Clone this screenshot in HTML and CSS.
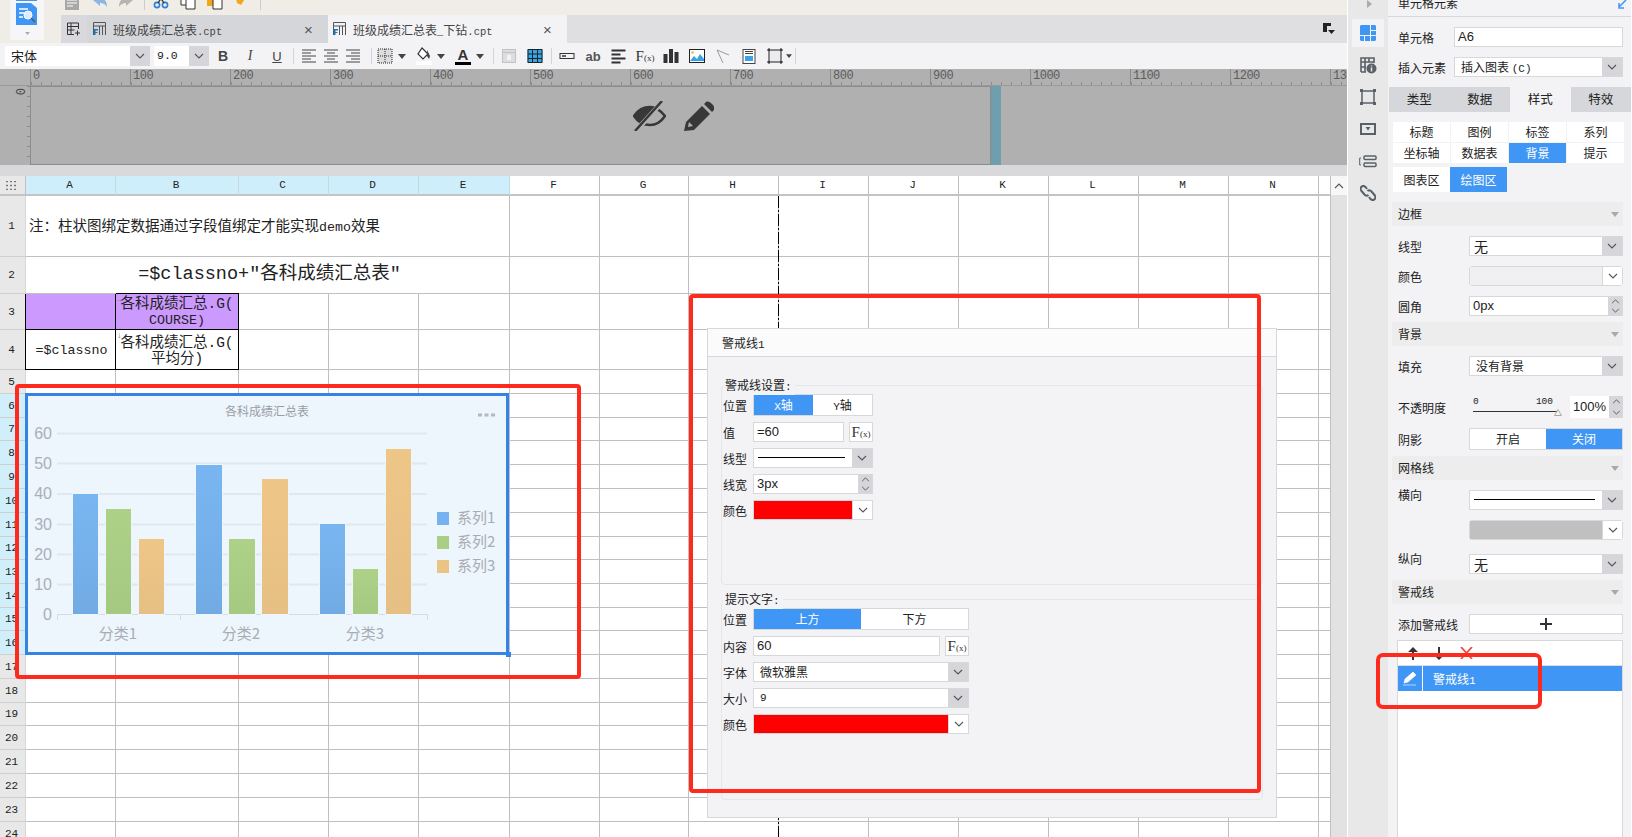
FILE: index.html
```html
<!DOCTYPE html>
<html lang="zh-CN">
<head>
  <meta charset="UTF-8" />
  <title>班级成绩汇总表_下钻.cpt</title>
  <link rel="stylesheet" href="styles.css">
</head>
<body>
<svg class="sprite" aria-hidden="true">
  <symbol id="chev" viewBox="0 0 10 6"><path d="M1 1l4 4 4-4" fill="none" stroke="#555" stroke-width="1.1"/></symbol>
  <symbol id="chev-up" viewBox="0 0 10 6"><path d="M1 5l4-4 4 4" fill="none" stroke="#555" stroke-width="1.1"/></symbol>
  <symbol id="caret" viewBox="0 0 8 5"><path d="M0 0h8L4 5z" fill="#444"/></symbol>
  <symbol id="fold" viewBox="0 0 8 5"><path d="M0 0h8L4 5z" fill="#a9a9a9"/></symbol>
</svg>

<div class="app">
  <div class="main">
    <!-- top: logo, quick bar, tabs -->
    <div class="head">
      <div class="logo-col">
        <div class="logo">
          <svg width="21" height="22" viewBox="0 0 21 22">
            <path d="M0 0h15l6 5v17H0z" fill="#4096f5"/>
            <path d="M3 6h9M3 10h5M3 14h4" stroke="#fff" stroke-width="1.4"/>
            <circle cx="12" cy="12" r="4" fill="#dcecfb" stroke="#fff"/>
            <path d="M15 15l4 4" stroke="#555" stroke-width="1.5"/>
          </svg>
          <svg class="logo-caret" width="5" height="3"><use href="#fold"/></svg>
        </div>
      </div>
      <div class="head-right">
        <div class="quick">
          <svg class="q1" width="16" height="16" viewBox="0 0 16 16"><path d="M1 0h14v16H1z" fill="#a8a8a8"/><path d="M3 6h10M3 9h10M3 12h6" stroke="#fff"/></svg>
          <svg class="q2" width="16" height="16" viewBox="0 0 16 16"><path d="M1 6l7-5v3c4 0 7 3 7 9-2-3-4-4-7-4v3z" fill="#8db6e6"/></svg>
          <svg class="q2" width="16" height="16" viewBox="0 0 16 16"><path d="M15 6L8 1v3C4 4 1 7 1 13c2-3 4-4 7-4v3z" fill="#b5b5b5"/></svg>
          <i class="qsep"></i>
          <svg class="q3" width="16" height="16" viewBox="0 0 16 16"><circle cx="4" cy="11" r="2.6" fill="none" stroke="#2e7fd6" stroke-width="1.6"/><circle cx="12" cy="11" r="2.6" fill="none" stroke="#2e7fd6" stroke-width="1.6"/><path d="M5 9L11 0M11 9L5 0" stroke="#333" stroke-width="1.3"/></svg>
          <svg class="q4" width="16" height="16" viewBox="0 0 16 16"><path d="M1 0h9v11H1z" fill="#fff" stroke="#333"/><path d="M6 4h9v11H6z" fill="#fff" stroke="#333"/></svg>
          <svg class="q4" width="16" height="16" viewBox="0 0 16 16"><path d="M0 0h11v12H0z" fill="#f2a61c"/><path d="M6 4h9v11H6z" fill="#fff" stroke="#333"/></svg>
          <svg class="q4" width="13" height="16" viewBox="0 0 13 16"><path d="M1 0h9l2 3-5 8-4-2z" fill="#f2a61c"/></svg>
          <i class="qsep qsep-last"></i>
        </div>
        <div class="tabs">
          <div class="tab-add">
            <svg width="14" height="14" viewBox="0 0 14 14"><path d="M.5 12.5V1h11v6M.5 4.5h11M4 1v11.500M.5 8h7M.5 12.500H7M10.500 8.500v5M8 11h5" fill="none" stroke="#333"/></svg>
          </div>
          <div class="tab">
            <svg width="13" height="14" viewBox="0 0 13 14"><path d="M.5 13V.5h12V13M.5 4h12M6.500 4v9M9.500 4v9" fill="none" stroke="#555"/><path d="M1 7h4v1.500H2.500V10H4.500v1H2.500v2H1z" fill="#1478c8"/></svg>
            <span class="tab-name">班级成绩汇总表<span class="tab-ext">.cpt</span></span>
            <span class="tab-x">×</span>
          </div>
          <div class="tab tab-on">
            <svg width="13" height="14" viewBox="0 0 13 14"><path d="M.5 13V.5h12V13M.5 4h12M6.500 4v9M9.500 4v9" fill="none" stroke="#555"/><path d="M1 7h4v1.500H2.500V10H4.500v1H2.500v2H1z" fill="#1478c8"/></svg>
            <span class="tab-name">班级成绩汇总表<span class="tab-ext">_</span>下钻<span class="tab-ext">.cpt</span></span>
            <span class="tab-x">×</span>
          </div>
          <div class="tab-more">
            <svg width="14" height="14" viewBox="0 0 14 14"><path d="M1 1h8v3H5v6H1z" fill="#222"/><path d="M6 8h7l-3.500 4z" fill="#222"/></svg>
          </div>
        </div>
      </div>
    </div>

    <div class="toolbar">
      <div class="sel font-sel"><span class="sel-val">宋体</span><span class="chev"><svg width="10" height="6"><use href="#chev"/></svg></span></div>
      <div class="sel size-sel"><span class="sel-val mono">9.0</span><span class="chev"><svg width="10" height="6"><use href="#chev"/></svg></span></div>

      <div class="tg tg-text">
        <span class="tool t-b">B</span><span class="tool t-i">I</span><span class="tool t-u">U</span>
      </div>
      <i class="tsep"></i>
      <div class="tg tg-align">
        <svg class="tool" width="20" height="14" viewBox="0 0 20 14"><path d="M3 1h14M3 4h9M3 7h14M3 10h9M3 13h14" stroke="#444"/></svg>
        <svg class="tool" width="20" height="14" viewBox="0 0 20 14"><path d="M3 1h14M6 4h8M3 7h14M6 10h8M3 13h14" stroke="#444"/></svg>
        <svg class="tool" width="20" height="14" viewBox="0 0 20 14"><path d="M3 1h14M8 4h9M3 7h14M8 10h9M3 13h14" stroke="#444"/></svg>
      </div>
      <i class="tsep tsep-align"></i>
      <div class="tg tg-drops">
        <div class="tdrop">
          <svg class="tool" width="16" height="16" viewBox="0 0 16 16"><rect x="1" y="1" width="14" height="14" fill="#ddd" stroke="#222" stroke-dasharray="1 1"/><path d="M8 1v14M1 8h14" stroke="#222" stroke-dasharray="1 1"/></svg>
          <svg class="caret" width="8" height="5"><use href="#caret"/></svg>
        </div>
        <div class="tdrop">
          <svg class="tool" width="16" height="18" viewBox="0 0 16 18"><path d="M6 1l6 6-5 5-5-5z" fill="#fff" stroke="#333" stroke-width="1.200"/><path d="M11 3l3 6-1 3-2-3z" fill="#444"/><rect y="14" width="16" height="4" fill="#fff"/></svg>
          <svg class="caret" width="8" height="5"><use href="#caret"/></svg>
        </div>
        <div class="tdrop">
          <span class="tool t-a">A</span>
          <svg class="caret" width="8" height="5"><use href="#caret"/></svg>
        </div>
      </div>
      <i class="tsep"></i>
      <div class="tg tg-six">
        <svg class="tool" width="14" height="14" viewBox="0 0 14 14"><rect x=".5" y=".5" width="13" height="13" fill="#ddd" stroke="#c2c2c2"/><path d="M.5 3.500h13" stroke="#c2c2c2"/><rect x="5" y="6" width="4" height="5" fill="#f3f3f6"/></svg>
        <svg class="tool" width="15" height="14" viewBox="0 0 15 14"><rect width="15" height="14" fill="#35a5ea"/><path d="M.5.500h14v13H.5zM.5 5h14M.5 9.500h14M5 .5v13M10 .5v13" fill="none" stroke="#222"/></svg>
      </div>
      <i class="tsep"></i>
      <div class="tg tg-six">
        <svg class="tool" width="15" height="6" viewBox="0 0 15 6"><rect x=".5" y=".5" width="14" height="5" fill="none" stroke="#333"/><path d="M2.500 3h4" stroke="#333" stroke-width="1.500"/></svg>
        <span class="tool t-ab">ab</span>
        <svg class="tool" width="15" height="15" viewBox="0 0 15 15"><path d="M0 1.500h14M0 5.500h9M0 9.500h14M0 13.500h9" stroke="#333" stroke-width="2"/></svg>
        <span class="tool t-fx">F<small>(x)</small></span>
        <svg class="tool" width="15" height="14" viewBox="0 0 15 14"><path d="M0 5h4v9H0zM5.500 0h4v14h-4zM11 3h4v11h-4z" fill="#333"/></svg>
        <svg class="tool" width="16" height="14" viewBox="0 0 16 14"><rect x=".5" y=".5" width="15" height="13" fill="#fff" stroke="#222"/><circle cx="3.500" cy="3.500" r="1.300" fill="#f5b642"/><path d="M1 12l4-5 3 3 3-5 4 5v2H1z" fill="#3aa3e8"/></svg>
        <svg class="tool" width="14" height="15" viewBox="0 0 14 15"><path d="M1 1l12 5M1 1l6 13" fill="none" stroke="#999"/></svg>
        <svg class="tool" width="13" height="15" viewBox="0 0 13 15"><rect x=".5" y=".5" width="12" height="14" fill="#fff" stroke="#444"/><path d="M2.500 2.500h8M2.500 4.500h8" stroke="#444"/><rect x="2.500" y="7" width="8" height="5" fill="#3aa3e8"/></svg>
        <svg class="tool" width="16" height="16" viewBox="0 0 16 16"><rect x="2" y="2" width="12" height="12" fill="#ececee" stroke="#222"/><path d="M2 0v3M0 2h3M14 0v3M13 2h3M2 13v3M0 14h3M14 13v3M13 14h3" stroke="#222"/></svg>
        <svg class="caret caret-box" width="6" height="4"><use href="#caret"/></svg>
      </div>
      <i class="tsep tsep-end"></i>
    </div>

    <div class="ruler">
      <span class="rmark">0</span><span class="rmark">100</span><span class="rmark">200</span><span class="rmark">300</span><span class="rmark">400</span><span class="rmark">500</span><span class="rmark">600</span><span class="rmark">700</span><span class="rmark">800</span><span class="rmark">900</span><span class="rmark">1000</span><span class="rmark">1100</span><span class="rmark">1200</span><span class="rmark">1300</span>
    </div>
    <div class="canvas">
      <div class="vruler"><span class="vzero">0</span></div>
      <div class="design">
        <svg width="33" height="30" viewBox="0 0 33 30">
          <path d="M1 15C5 9 10 6 17 6c6 0 11 4 15 9-4 6-9 9-15 9-7 0-12-3-16-9z" fill="none" stroke="#383838" stroke-width="2.500"/>
          <path d="M1 15C5 9 10 6 17 6h5L8 22c-3-2-5-4-7-7z" fill="#383838"/>
          <path d="M3 30L30 0" stroke="#b0b0b0" stroke-width="5"/>
          <path d="M2 30L29 0" stroke="#383838" stroke-width="2.500"/>
        </svg>
        <svg class="pencil" width="30" height="30" viewBox="0 0 30 30">
          <path d="M22 1c2-1 4 0 6 2s3 4 2 6l-2 2-8-8zM18 5l8 8L10 29 0 30l2-9zM5 21l-1 5 5-1z" fill="#383838" fill-rule="evenodd"/>
        </svg>
      </div>
      <div class="band"></div>
    </div>

    <div class="sheet-wrap">
      <table class="sheet">
        <colgroup>
          <col class="c26"><col class="c90"><col class="c123"><col class="c90"><col class="c90"><col class="c91"><col class="c90"><col class="c89"><col class="c90"><col class="c90"><col class="c90"><col class="c90"><col class="c90"><col class="c90"><col class="c90"><col class="c12">
        </colgroup>
        <tr class="r20 heads">
          <th class="corner"><svg width="12" height="9" viewBox="0 0 12 9"><path d="M0 .5h12M0 4.500h12M0 8.500h12" stroke="#777" stroke-width="1.500" stroke-dasharray="2 2"/></svg></th>
          <th class="csel">A</th><th class="csel">B</th><th class="csel">C</th><th class="csel">D</th><th class="csel">E</th><th>F</th><th>G</th><th>H</th><th>I</th><th>J</th><th>K</th><th>L</th><th>M</th><th>N</th><th></th>
        </tr>
        <tr class="r61"><th>1</th><td colspan="5" class="note">注：柱状图绑定数据通过字段值绑定才能实现<span class="lat">demo</span>效果</td><td></td><td></td><td></td><td></td><td></td><td></td><td></td><td></td><td></td><td></td></tr>
        <tr class="r37"><th>2</th><td colspan="5" class="big">=$classno+"各科成绩汇总表"</td><td></td><td></td><td></td><td></td><td></td><td></td><td></td><td></td><td></td><td></td></tr>
        <tr class="r36"><th>3</th><td class="box purple"></td><td class="box purple mid"><span class="flag">→</span>各科成绩汇总.G(<br><span class="lat">COURSE)</span></td><td></td><td></td><td></td><td></td><td></td><td></td><td></td><td></td><td></td><td></td><td></td><td></td><td></td></tr>
        <tr class="r40"><th>4</th><td class="box mid"><span class="lat classno">=$classno</span></td><td class="box mid"><span class="flag">↓</span>各科成绩汇总.G(<br>平均分)</td><td></td><td></td><td></td><td></td><td></td><td></td><td></td><td></td><td></td><td></td><td></td><td></td><td></td></tr>
        <tr class="r24"><th>5</th><td></td><td></td><td></td><td></td><td></td><td></td><td></td><td></td><td></td><td></td><td></td><td></td><td></td><td></td><td></td></tr>
        <tr class="r24"><th class="rsel">6</th><td></td><td></td><td></td><td></td><td></td><td></td><td></td><td></td><td></td><td></td><td></td><td></td><td></td><td></td><td></td></tr>
        <tr class="r23"><th class="rsel">7</th><td></td><td></td><td></td><td></td><td></td><td></td><td></td><td></td><td></td><td></td><td></td><td></td><td></td><td></td><td></td></tr>
        <tr class="r24"><th class="rsel">8</th><td></td><td></td><td></td><td></td><td></td><td></td><td></td><td></td><td></td><td></td><td></td><td></td><td></td><td></td><td></td></tr>
        <tr class="r24"><th class="rsel">9</th><td></td><td></td><td></td><td></td><td></td><td></td><td></td><td></td><td></td><td></td><td></td><td></td><td></td><td></td><td></td></tr>
        <tr class="r24"><th class="rsel">10</th><td></td><td></td><td></td><td></td><td></td><td></td><td></td><td></td><td></td><td></td><td></td><td></td><td></td><td></td><td></td></tr>
        <tr class="r24"><th class="rsel">11</th><td></td><td></td><td></td><td></td><td></td><td></td><td></td><td></td><td></td><td></td><td></td><td></td><td></td><td></td><td></td></tr>
        <tr class="r23"><th class="rsel">12</th><td></td><td></td><td></td><td></td><td></td><td></td><td></td><td></td><td></td><td></td><td></td><td></td><td></td><td></td><td></td></tr>
        <tr class="r24"><th class="rsel">13</th><td></td><td></td><td></td><td></td><td></td><td></td><td></td><td></td><td></td><td></td><td></td><td></td><td></td><td></td><td></td></tr>
        <tr class="r24"><th class="rsel">14</th><td></td><td></td><td></td><td></td><td></td><td></td><td></td><td></td><td></td><td></td><td></td><td></td><td></td><td></td><td></td></tr>
        <tr class="r23"><th class="rsel">15</th><td></td><td></td><td></td><td></td><td></td><td></td><td></td><td></td><td></td><td></td><td></td><td></td><td></td><td></td><td></td></tr>
        <tr class="r24"><th class="rsel">16</th><td></td><td></td><td></td><td></td><td></td><td></td><td></td><td></td><td></td><td></td><td></td><td></td><td></td><td></td><td></td></tr>
        <tr class="r24"><th>17</th><td></td><td></td><td></td><td></td><td></td><td></td><td></td><td></td><td></td><td></td><td></td><td></td><td></td><td></td><td></td></tr>
        <tr class="r24"><th>18</th><td></td><td></td><td></td><td></td><td></td><td></td><td></td><td></td><td></td><td></td><td></td><td></td><td></td><td></td><td></td></tr>
        <tr class="r23"><th>19</th><td></td><td></td><td></td><td></td><td></td><td></td><td></td><td></td><td></td><td></td><td></td><td></td><td></td><td></td><td></td></tr>
        <tr class="r24"><th>20</th><td></td><td></td><td></td><td></td><td></td><td></td><td></td><td></td><td></td><td></td><td></td><td></td><td></td><td></td><td></td></tr>
        <tr class="r24"><th>21</th><td></td><td></td><td></td><td></td><td></td><td></td><td></td><td></td><td></td><td></td><td></td><td></td><td></td><td></td><td></td></tr>
        <tr class="r24"><th>22</th><td></td><td></td><td></td><td></td><td></td><td></td><td></td><td></td><td></td><td></td><td></td><td></td><td></td><td></td><td></td></tr>
        <tr class="r24"><th>23</th><td></td><td></td><td></td><td></td><td></td><td></td><td></td><td></td><td></td><td></td><td></td><td></td><td></td><td></td><td></td></tr>
        <tr class="r24"><th>24</th><td></td><td></td><td></td><td></td><td></td><td></td><td></td><td></td><td></td><td></td><td></td><td></td><td></td><td></td><td></td></tr>
      </table>
      <div class="vscroll"><svg width="10" height="6"><use href="#chev-up"/></svg></div>
    </div>
  </div>

  <!-- icon strip -->
  <div class="strip">
    <svg class="strip-arrow" width="5" height="8" viewBox="0 0 5 8"><path d="M0 0l5 4-5 4z" fill="#aaa"/></svg>
    <div class="strip-item strip-on">
      <svg width="16" height="16" viewBox="0 0 16 16"><path d="M1 0h9v10H0V1zM11 0h4l1 1v4h-5zM11 6h5v4h-5zM0 11h4v5H1l-1-1zM5 11h5v5H5zM11 11h5v4l-1 1h-4z" fill="#4096f5"/></svg>
    </div>
    <div class="strip-item">
      <svg width="17" height="17" viewBox="0 0 17 17"><path d="M1 15V1h13v5M1 5h13M5 1v14M9 1v4M1 10h5M1 15h5" fill="none" stroke="#5a6068" stroke-width="1.600"/><circle cx="11.500" cy="11.500" r="5" fill="#5a6068"/><path d="M11.500 8.500v1M11.500 10.500v4" stroke="#e8e8e8" stroke-width="1.500"/></svg>
    </div>
    <div class="strip-item">
      <svg width="16" height="16" viewBox="0 0 16 16"><rect x="2" y="2" width="12" height="12" fill="none" stroke="#5a6068" stroke-width="1.500"/><path d="M0 0h3v3H0zM13 0h3v3h-3zM0 13h3v3H0zM13 13h3v3h-3z" fill="#5a6068"/></svg>
    </div>
    <div class="strip-item">
      <svg width="16" height="12" viewBox="0 0 16 12"><rect x="1" y="1" width="14" height="10" fill="none" stroke="#5a6068" stroke-width="2"/><path d="M5.500 4h5L8 7.500z" fill="#5a6068"/></svg>
    </div>
    <div class="strip-item">
      <svg width="18" height="13" viewBox="0 0 18 13"><path d="M2 3H.7v7H2" fill="none" stroke="#5a6068"/><rect x="5" y="1" width="12" height="3.500" rx="1" fill="none" stroke="#5a6068" stroke-width="1.500"/><rect x="5" y="8" width="12" height="3.500" rx="1" fill="none" stroke="#5a6068" stroke-width="1.500"/></svg>
    </div>
    <div class="strip-item">
      <svg width="16" height="16" viewBox="0 0 16 16"><path d="M7 4l-1.500-2C4 .6 2.500.8 1.500 1.800S.2 4.500 1.500 6l3 3.500C6 11 7.500 11 8.500 10M9 12l1.500 2c1.500 1.400 3 1.200 4 .2s1.300-2.700 0-4.200l-3-3.500C10 5 8.500 5 7.500 6" fill="none" stroke="#5a6068" stroke-width="2"/></svg>
    </div>
  </div>

  <!-- property panel -->
  <div class="pane">
    <div class="pane-head">
      <span>单元格元素</span>
      <svg width="9" height="9" viewBox="0 0 9 9"><path d="M8 0L1 7M1 3v5h5" fill="none" stroke="#4096f5" stroke-width="1.500"/></svg>
    </div>
    <div class="prow narrow"><label>单元格</label><div class="ctl"><span class="val lat">A6</span></div></div>
    <div class="prow narrow"><label>插入元素</label><div class="ctl"><span class="val pad">插入图表 <span class="lat-sm">(C)</span></span><span class="chev"><svg width="10" height="6"><use href="#chev"/></svg></span></div></div>

    <div class="ptabs"><span>类型</span><span>数据</span><span class="on">样式</span><span>特效</span></div>

    <div class="subtabs">
      <span>标题</span><span>图例</span><span>标签</span><span>系列</span>
      <span>坐标轴</span><span>数据表</span><span class="on">背景</span><span>提示</span>
    </div>
    <div class="subtabs area g4"><span>图表区</span><span class="on">绘图区</span></div>

    <div class="section">边框<svg width="8" height="5"><use href="#fold"/></svg></div>
    <div class="prow"><label>线型</label><div class="ctl"><span class="val cn">无</span><span class="chev"><svg width="10" height="6"><use href="#chev"/></svg></span></div></div>
    <div class="prow"><label>颜色</label><div class="ctl round"><span class="val blank"></span><span class="chev chev-w"><svg width="10" height="6"><use href="#chev"/></svg></span></div></div>
    <div class="prow"><label>圆角</label><div class="ctl"><span class="val lat">0px</span><span class="spin"><svg width="9" height="5"><use href="#chev-up"/></svg><svg width="9" height="5"><use href="#chev"/></svg></span></div></div>

    <div class="section g6">背景<svg width="8" height="5"><use href="#fold"/></svg></div>
    <div class="prow"><label>填充</label><div class="ctl"><span class="val pad">没有背景</span><span class="chev"><svg width="10" height="6"><use href="#chev"/></svg></span></div></div>
    <div class="prow g20 tall"><label>不透明度</label>
      <div class="slider"><span class="slider-nums"><b>0</b><b>100</b></span><span class="slider-line"></span><svg class="slider-thumb" width="8" height="7" viewBox="0 0 8 7"><path d="M4 .5l3.500 6H.5z" fill="#f3f3f6" stroke="#aaa"/></svg></div>
      <div class="ctl pct"><span class="val lat-c">100%</span><span class="spin"><svg width="9" height="5"><use href="#chev-up"/></svg><svg width="9" height="5"><use href="#chev"/></svg></span></div>
    </div>
    <div class="prow seg-row"><label>阴影</label><div class="seg panel-seg"><span>开启</span><span class="on">关闭</span></div></div>

    <div class="section g6">网格线<svg width="8" height="5"><use href="#fold"/></svg></div>
    <div class="prow"><label class="up">横向</label><div class="ctl"><span class="val"><i class="line"></i></span><span class="chev"><svg width="10" height="6"><use href="#chev"/></svg></span></div></div>
    <div class="prow"><label></label><div class="ctl round"><span class="val greyfill"></span><span class="chev chev-w"><svg width="10" height="6"><use href="#chev"/></svg></span></div></div>
    <div class="prow g14"><label class="up">纵向</label><div class="ctl"><span class="val cn">无</span><span class="chev"><svg width="10" height="6"><use href="#chev"/></svg></span></div></div>

    <div class="section g6">警戒线<svg width="8" height="5"><use href="#fold"/></svg></div>
    <div class="prow"><label>添加警戒线</label><div class="ctl add-btn"><svg width="12" height="12" viewBox="0 0 12 12"><path d="M6 0v12M0 6h12" stroke="#333" stroke-width="2"/></svg></div></div>

    <div class="alert-list g6">
      <div class="list-tools">
        <svg width="10" height="13" viewBox="0 0 10 13"><path d="M5 0l5 5H6v8H4V5H0z" fill="#333"/></svg>
        <svg width="10" height="13" viewBox="0 0 10 13"><path d="M5 13l5-5H6V0H4v8H0z" fill="#333"/></svg>
        <svg width="13" height="12" viewBox="0 0 13 12"><path d="M1 0l11 12M12 0L1 12" stroke="#f04a3a" stroke-width="1.800"/></svg>
      </div>
      <div class="list-row">
        <span class="list-edit"><svg width="14" height="14" viewBox="0 0 14 14"><path d="M10 0l3 3-8 7-4 1 1-4zM0 13h13" fill="#fff" stroke="#fff" stroke-width=".6"/></svg></span>
        <span class="list-name">警戒线<span class="lat-sm">1</span></span>
      </div>
    </div>
  </div>

  <!-- things lying over the sheet -->
  <i class="dashline"></i>

  <div class="chart">
    <svg width="490" height="268" viewBox="22 390 490 268">
      <defs>
        <linearGradient id="gb" x1="0" y1="0" x2="0" y2="1"><stop offset="0" stop-color="#79b6f1"/><stop offset="1" stop-color="#72abe4"/></linearGradient>
        <linearGradient id="gg" x1="0" y1="0" x2="0" y2="1"><stop offset="0" stop-color="#add187"/><stop offset="1" stop-color="#a5c981"/></linearGradient>
        <linearGradient id="go" x1="0" y1="0" x2="0" y2="1"><stop offset="0" stop-color="#eec687"/><stop offset="1" stop-color="#e6bf84"/></linearGradient>
      </defs>
      <rect x="26.500" y="394.500" width="481" height="259" fill="#edf5fd" stroke="#3683e8" stroke-width="3"/>
      <rect x="506" y="652" width="5" height="5" fill="#3683e8"/>
      <text class="ch-title" x="267" y="416" text-anchor="middle">各科成绩汇总表</text>
      <path d="M478 415h4M484.500 415h4M491 415h4" stroke="#b5b9bf" stroke-width="3"/>
      <g class="ch-grid">
        <path d="M57 433.500h370M57 463.500h370M57 494h370M57 524.500h370M57 554.500h370M57 584.500h370"/>
      </g>
      <path class="ch-axis" d="M57.500 620v-5.500h370v5.500M180.500 614.500V620"/>
      <g class="ch-nums" text-anchor="end">
        <text x="52" y="439">60</text><text x="52" y="469">50</text><text x="52" y="499">40</text><text x="52" y="530">30</text><text x="52" y="560">20</text><text x="52" y="590">10</text><text x="52" y="620">0</text>
      </g>
      <g class="ch-bars">
        <rect x="73" y="494" width="25" height="120" fill="url(#gb)"/>
        <rect x="106" y="509" width="25" height="105" fill="url(#gg)"/>
        <rect x="139" y="539" width="25" height="75" fill="url(#go)"/>
        <rect x="196" y="465" width="26" height="149" fill="url(#gb)"/>
        <rect x="229" y="539" width="26" height="75" fill="url(#gg)"/>
        <rect x="262" y="479" width="26" height="135" fill="url(#go)"/>
        <rect x="320" y="524" width="25" height="90" fill="url(#gb)"/>
        <rect x="353" y="569" width="25" height="45" fill="url(#gg)"/>
        <rect x="386" y="449" width="25" height="165" fill="url(#go)"/>
      </g>
      <g class="ch-labels" text-anchor="middle">
        <text x="118" y="639">分类1</text><text x="241" y="639">分类2</text><text x="365" y="639">分类3</text>
      </g>
      <rect x="437" y="512" width="12" height="13" fill="#75b2ef"/>
      <rect x="437" y="536" width="12" height="13" fill="#a9ce84"/>
      <rect x="437" y="560" width="12" height="13" fill="#ebc384"/>
      <g class="ch-labels">
        <text x="457" y="523">系列1</text><text x="457" y="547">系列2</text><text x="457" y="571">系列3</text>
      </g>
    </svg>
  </div>

  <div class="dialog">
    <div class="dlg-title">警戒线<span class="lat-sm">1</span></div>
    <div class="group g-first">
      <span class="legend">警戒线设置<span class="lat-sm">:</span></span>
      <div class="drow"><label>位置</label><div class="seg seg-short tall-seg"><span class="on"><span class="lat-sm">X</span>轴</span><span><span class="lat-sm">Y</span>轴</span></div></div>
      <div class="drow"><label>值</label><div class="ctl c-value"><span class="val lat">=60</span></div><div class="ctl fx"><span class="t-fx">F<small>(x)</small></span></div></div>
      <div class="drow"><label>线型</label><div class="ctl c-short"><span class="val"><i class="line"></i></span><span class="chev"><svg width="10" height="6"><use href="#chev"/></svg></span></div></div>
      <div class="drow"><label>线宽</label><div class="ctl c-short"><span class="val lat">3px</span><span class="spin"><svg width="9" height="5"><use href="#chev-up"/></svg><svg width="9" height="5"><use href="#chev"/></svg></span></div></div>
      <div class="drow"><label>颜色</label><div class="ctl c-short"><span class="val redfill"></span><span class="chev chev-w"><svg width="10" height="6"><use href="#chev"/></svg></span></div></div>
    </div>
    <div class="group g-second">
      <span class="legend">提示文字<span class="lat-sm">:</span></span>
      <div class="drow"><label>位置</label><div class="seg seg-wide tall-seg"><span class="on">上方</span><span>下方</span></div></div>
      <div class="drow"><label>内容</label><div class="ctl c-content"><span class="val lat">60</span></div><div class="ctl fx"><span class="t-fx">F<small>(x)</small></span></div></div>
      <div class="drow"><label>字体</label><div class="ctl c-wide"><span class="val pad">微软雅黑</span><span class="chev"><svg width="10" height="6"><use href="#chev"/></svg></span></div></div>
      <div class="drow"><label>大小</label><div class="ctl c-wide"><span class="val pad lat-sm">9</span><span class="chev"><svg width="10" height="6"><use href="#chev"/></svg></span></div></div>
      <div class="drow"><label>颜色</label><div class="ctl c-wide"><span class="val redfill"></span><span class="chev chev-w"><svg width="10" height="6"><use href="#chev"/></svg></span></div></div>
    </div>
  </div>

  <i class="mark mark-chart"></i>
  <i class="mark mark-dialog"></i>
  <i class="mark mark-list"></i>
</div>
</body>
</html>
```

FILE: styles.css
```css
* {
  margin: 0;
  padding: 0;
  box-sizing: border-box;
}
html, body {
  width: 1632px;
  height: 837px;
  overflow: hidden;
  background: #fff;
  font-family: "Noto Sans CJK SC", "Liberation Sans", sans-serif;
  font-size: 12px;
  color: #222;
}
.sprite {
  position: absolute;
  width: 0;
  height: 0;
}
.app {
  position: relative;
  display: flex;
  width: 1632px;
  height: 837px;
  overflow: hidden;
}
i {
  font-style: normal;
  display: block;
}
.lat {
  font-family: "Liberation Mono", "Noto Sans CJK SC", monospace;
  font-size: 13.3px;
}
.lat-sm {
  font-family: "Liberation Mono", "Noto Sans CJK SC", monospace;
  font-size: 11px;
}
.mono {
  font-family: "Liberation Mono", monospace;
}

/* left column */
.main {
  width: 1348px;
  display: flex;
  flex-direction: column;
  border-right: 1px solid #fff;
}
.head {
  display: flex;
  height: 43px;
  background: #f0ede6;
}
.logo-col {
  width: 61px;
  padding-left: 10px;
}
.logo {
  position: relative;
  width: 34px;
  height: 40px;
  background: #f6f6f9;
  padding: 3px 0 0 6px;
}
.logo::before {
  content: "";
  position: absolute;
  left: 6px;
  top: 0;
  width: 21px;
  height: 1px;
  background: #4096f5;
}
.logo-caret {
  position: absolute;
  left: 15px;
  top: 32px;
}
.head-right {
  flex: 1;
  display: flex;
  flex-direction: column;
}
.quick {
  height: 15px;
  display: flex;
  align-items: flex-start;
  overflow: hidden;
  padding-left: 3px;
}
.quick svg {
  margin-top: -6px;
}
.q1 { margin-right: 12px; }
.q2 { margin-right: 10px; }
.q3 { margin-right: 11px; }
.q4 { margin-right: 11px; }
.qsep {
  width: 1px;
  height: 10px;
  background: #ccc;
  margin-right: 8px;
}
.qsep-last {
  margin-left: 2px;
}
.tabs {
  flex: 1;
  display: flex;
  background: #dfdfe2;
}
.tab-add {
  width: 26px;
  background: #d9d9dd;
  display: flex;
  align-items: center;
  justify-content: center;
}
.tab {
  width: 241px;
  display: flex;
  align-items: center;
  background: #d5d6da;
  padding-left: 6px;
  font-size: 12px;
  color: #444;
}
.tab-on {
  width: 239px;
  background: #f3f3f6;
  padding-left: 5px;
}
.tab-name {
  margin-left: 7px;
  flex: 1;
}
.tab-ext {
  font-family: "Liberation Mono", monospace;
  font-size: 10.5px;
}
.tab-x {
  width: 24px;
  font-family: "Liberation Sans", sans-serif;
  font-size: 15px;
  color: #555;
}
.tab-more {
  margin-left: auto;
  width: 26px;
  display: flex;
  align-items: center;
  margin-right: -1px;
  padding-right: 9px;
}

/* toolbar */
.toolbar {
  height: 26px;
  flex: none;
  background: #f3f3f6;
  display: flex;
  align-items: center;
  padding-left: 5px;
}
.sel {
  display: flex;
  height: 20px;
  background: #fff;
}
.sel-val {
  flex: 1;
  padding-left: 6px;
  font-size: 13px;
  line-height: 20px;
}
.font-sel { width: 145px; }
.size-sel { width: 55px; margin-left: 4px; }
.size-sel .sel-val { padding-left: 3px; font-size: 11.5px; }
.chev {
  width: 20px;
  flex: none;
  background: #d6d6da;
  display: flex;
  align-items: center;
  justify-content: center;
}
.chev-w {
  background: #fff;
  border-left: 1px solid #d8d8da;
}
.tg {
  display: flex;
  align-items: center;
}
.tool {
  flex: none;
  width: 20px;
  text-align: center;
}
.tg-text { margin-left: 4px; gap: 7px; }
.tg-align { margin-left: 5px; gap: 2px; }
.tg-drops { margin-left: 3px; gap: 5px; }
.tg-six { margin-left: 5px; gap: 6px; }
.tsep {
  width: 1px;
  height: 16px;
  background: #d4d4d8;
  margin-left: 6px;
  flex: none;
}
.tsep-align { margin-left: 8px; }
.tsep-end { margin-left: 3px; }
.tdrop {
  display: flex;
  align-items: center;
  width: 34px;
}
.caret {
  margin-left: 3px;
}
.caret-box {
  margin-left: -5px;
}
.t-b {
  font: bold 14px "Liberation Sans", sans-serif;
  color: #444;
}
.t-i {
  font: italic 14px "Liberation Serif", serif;
  color: #444;
}
.t-u {
  font: 13px "Liberation Sans", sans-serif;
  text-decoration: underline;
  color: #444;
}
.t-a {
  font: bold 15px "Liberation Sans", sans-serif;
  color: #333;
  line-height: 14px;
  border-bottom: 3px solid #000;
  width: 16px;
  margin: 0 2px;
}
.t-ab {
  font: bold 13px "Liberation Sans", sans-serif;
  color: #555;
}
.t-fx {
  font: 15px "Liberation Serif", serif;
  color: #333;
  white-space: nowrap;
}
.t-fx small {
  font-size: 9px;
}

/* ruler and design strip */
.ruler {
  height: 17px;
  flex: none;
  background: #b0b0b0;
  display: flex;
  padding-left: 30px;
  overflow: hidden;
  border-bottom: 1px solid #999;
}
.rmark {
  flex: none;
  width: 100px;
  font: 12px/14px "Liberation Mono", monospace;
  letter-spacing: -0.5px;
  color: #5c5c5c;
  padding-left: 2px;
  border-left: 1px solid #8c8c8c;
  background: repeating-linear-gradient(90deg, #8c8c8c 0 1px, transparent 1px 10px) left bottom / 100% 3px no-repeat;
}
.canvas {
  height: 79px;
  flex: none;
  background: #b0b0b0;
  display: flex;
}
.vruler {
  width: 30px;
  padding-left: 14px;
  background: repeating-linear-gradient(180deg, #8c8c8c 0 1px, transparent 1px 10px) right top / 3px 100% no-repeat;
}
.vzero {
  display: block;
  transform: rotate(90deg);
  font: 12px/14px "Liberation Mono", monospace;
  color: #444;
  width: 10px;
}
.design {
  width: 961px;
  border: 1px solid #8c8c8c;
  padding: 14px 0 0 602px;
  display: flex;
  align-items: flex-start;
}
.pencil {
  margin-left: 18px;
}
.band {
  width: 10px;
  background: #6f9fac;
}

/* sheet */
.sheet-wrap {
  flex: 1;
  margin-top: 11px;
  position: relative;
  display: flex;
  align-items: flex-start;
  overflow: hidden;
  background: #fff;
  box-shadow: 0 -11px 0 #d9d9db;
}
.sheet {
  width: 1331px;
  flex: none;
  table-layout: fixed;
  border-collapse: separate;
  border-spacing: 0;
  font-family: "Liberation Mono", "Noto Sans CJK SC", monospace;
}
.c26 { width: 26px; }
.c90 { width: 90px; }
.c123 { width: 123px; }
.c91 { width: 91px; }
.c89 { width: 89px; }
.c12 { width: 12px; }
.r20 { height: 20px; }
.r61 { height: 61px; }
.r37 { height: 37px; }
.r36 { height: 36px; }
.r40 { height: 40px; }
.r24 { height: 24px; }
.r23 { height: 23px; }
.sheet td {
  border-right: 1px solid #c0c0c0;
  border-bottom: 1px solid #c0c0c0;
  font-size: 14.5px;
  line-height: 16px;
  padding: 0;
}
.sheet th {
  font-weight: normal;
  font-size: 11px;
  color: #222;
  background: #e8e8e8;
  border-bottom: 1px solid #cfcfcf;
  border-right: 1px solid #d8d8d8;
  padding: 0 2px 0 0;
}
.sheet th.rsel {
  background: #d0effb;
}
.heads th {
  background: #fff;
  border-right: 1px solid #c0c0c0;
  border-bottom: 2px solid #c4c4c4;
}
.sheet .heads th.csel {
  background: #ceeefb;
  border-right-color: #c4d8e0;
}
.sheet .heads th.corner {
  background: #e8e8e8;
  line-height: 0;
}
.sheet td.note {
  padding: 2px 0 0 3px;
  line-height: 18px;
}
.sheet td.big {
  font-size: 18.5px;
  text-align: center;
  padding: 0 0 1px 4px;
}
.sheet td.box {
  border: 1px solid #000;
  border-left-width: 0;
  border-top-width: 0;
}
.sheet tr td.box:first-of-type {
  box-shadow: -1px 0 0 #000;
}
.r36 td.box {
  box-shadow: 0 -1px 0 #000;
}
.r36 td.box:first-of-type {
  box-shadow: -1px 0 0 #000, 0 -1px 0 #000;
}
.purple {
  background: #cc99ff;
}
.sheet td.mid {
  text-align: center;
  white-space: nowrap;
  position: relative;
  line-height: 16px;
  padding-top: 2px;
}
.r40 .sheet td.mid {
  line-height: 17px;
}
.classno {
  padding-left: 2px;
}
.flag {
  position: absolute;
  left: 1px;
  top: 1px;
  font-size: 8px;
  line-height: 9px;
  color: #666;
}
.vscroll {
  width: 16px;
  height: 100%;
  flex: none;
  background: linear-gradient(#f7f7f7 19px, #e2e2e2 19px);
  text-align: center;
  line-height: 16px;
}

/* icon strip */
.strip {
  position: relative;
  width: 40px;
  flex: none;
  background: #e8e8e8;
  padding-top: 19px;
  display: flex;
  flex-direction: column;
  align-items: center;
}
.strip-arrow {
  position: absolute;
  left: 19px;
  top: 0;
}
.strip-item {
  width: 32px;
  height: 32px;
  display: flex;
  align-items: center;
  justify-content: center;
  flex: none;
}
.strip-on {
  height: 28px;
  background: #f3f3f6;
  margin-bottom: 2px;
}

/* property panel */
.pane {
  width: 243px;
  flex: none;
  background: #f3f3f6;
  padding: 0 8px 0 4px;
  display: flex;
  flex-direction: column;
  height: 837px;
}
.pane > * {
  margin-top: 10px;
  flex: none;
}
.pane > .pane-head {
  margin: 0 -8px 0 -4px;
  height: 17px;
  border-bottom: 1px solid #d8d8da;
  padding: 0 4px 0 10px;
  display: flex;
  justify-content: space-between;
  overflow: hidden;
}
.pane-head span {
  line-height: 14px;
  margin-top: -4px;
}
.pane > .g4 { margin-top: 4px; }
.pane > .g6 { margin-top: 6px; }
.pane > .g14 { margin-top: 14px; }
.pane > .g20 { margin-top: 20px; }
.prow {
  display: flex;
  align-items: center;
  height: 20px;
}
.prow label {
  width: 77px;
  flex: none;
  padding-left: 6px;
  white-space: nowrap;
}
.prow label.up {
  align-self: flex-start;
  margin-top: -4px;
}
.prow.narrow label {
  width: 62px;
}
.ctl {
  flex: 1;
  height: 100%;
  display: flex;
  background: #fff;
  border: 1px solid #d8d8da;
  min-width: 0;
}
.val {
  flex: 1;
  min-width: 0;
  padding-left: 3px;
  line-height: 18px;
  white-space: nowrap;
}
.val.lat {
  font-family: "Liberation Sans", sans-serif;
  font-size: 13px;
}
.val.pad {
  padding-left: 6px;
}
.val.cn {
  font-size: 14px;
  padding-left: 4px;
}
.val.blank {
  background: #f0f0f2;
}
.round {
  border-radius: 3px;
}
.greyfill {
  background: #c0c0c0;
}
.redfill {
  background: #f00;
}
.line {
  height: 1px;
  background: #000;
  margin: 8px 7px 0 1px;
}
.spin {
  width: 14px;
  flex: none;
  background: #d6d6da;
  display: flex;
  flex-direction: column;
  align-items: center;
  justify-content: space-around;
}
.ptabs {
  display: flex;
  margin-left: -3px;
  margin-right: -8px;
  height: 25px;
  background: #d6d7db;
}
.ptabs span {
  flex: 1;
  text-align: center;
  line-height: 24px;
  font-size: 12.5px;
}
.ptabs .on {
  background: #f3f3f6;
}
.subtabs {
  display: grid;
  grid-template-columns: repeat(4, 57px);
  grid-auto-rows: 20px;
  gap: 1px;
  margin-left: 1px;
}
.subtabs span {
  background: #fff;
  text-align: center;
  line-height: 20px;
}
.subtabs .on {
  background: #4096f5;
  color: #fff;
}
.subtabs.area {
  grid-template-columns: repeat(2, 57px);
  grid-auto-rows: 25px;
  gap: 0;
}
.subtabs.area span {
  line-height: 25px;
}
.section {
  height: 24px;
  background: #ededed;
  padding: 0 4px 0 6px;
  line-height: 24px;
  display: flex;
  justify-content: space-between;
  align-items: center;
}
.tall {
  height: 22px;
}
.slider {
  position: relative;
  width: 101px;
  height: 22px;
  flex: none;
}
.slider-nums {
  display: flex;
  justify-content: space-between;
  padding: 0 17px 0 4px;
}
.slider-nums b {
  font: 9.5px/12px "Liberation Mono", monospace;
}
.slider-line {
  position: absolute;
  left: 4px;
  right: 12px;
  top: 15px;
  height: 1px;
  background: #333;
}
.slider-thumb {
  position: absolute;
  right: 8px;
  top: 13px;
}
.pct {
  border: 0;
}
.lat-c {
  font: 13px/22px "Liberation Sans", sans-serif;
  text-align: center;
  padding: 0;
}
.seg-row {
  height: 22px;
}
.seg {
  display: flex;
  background: #fff;
  border: 1px solid #d8d8da;
  height: 100%;
}
.seg span {
  text-align: center;
  white-space: nowrap;
}
.seg > span {
  flex: 1;
  line-height: 20px;
}
.seg .on {
  background: #4096f5;
  color: #fff;
}
.panel-seg {
  flex: 1;
}
.add-btn {
  align-items: center;
  justify-content: center;
}
.alert-list {
  flex: 1 !important;
  margin-left: 5px;
  background: #fff;
  border: 1px solid #d8d8da;
  border-bottom: 0;
}
.list-tools {
  height: 25px;
  display: flex;
  align-items: center;
  gap: 16px;
  padding-left: 10px;
  border-bottom: 1px solid #ddd;
}
.list-row {
  height: 25px;
  background: #4096f5;
  color: #fff;
  display: flex;
  align-items: center;
}
.list-edit {
  width: 25px;
  height: 100%;
  display: flex;
  align-items: center;
  justify-content: center;
  border-right: 1px solid #fff;
}
.list-name {
  margin-left: 10px;
}

/* overlays */
.dashline {
  position: absolute;
  left: 778px;
  top: 196px;
  bottom: 0;
  width: 1px;
  background: repeating-linear-gradient(180deg, #000 0 12px, transparent 12px 14px, #000 14px 16px, transparent 16px 18px);
}
.chart {
  position: absolute;
  left: 22px;
  top: 390px;
  width: 490px;
  height: 268px;
}
.chart svg {
  display: block;
}
.ch-title {
  font-size: 12px;
  fill: #9a9ea4;
}
.ch-grid path {
  stroke: #e0e7ef;
  stroke-width: 2;
  fill: none;
}
.ch-axis {
  stroke: #d5dbe2;
  fill: none;
  stroke-width: 1;
}
.ch-nums text {
  font: 16px "Liberation Sans", sans-serif;
  fill: #aab0b7;
}
.ch-bars rect {
  stroke: #edf5fd;
  stroke-width: 2;
  paint-order: stroke;
}
.ch-labels text {
  font-size: 15px;
  fill: #a8adb3;
}
.dialog {
  position: absolute;
  left: 707px;
  top: 328px;
  width: 570px;
  height: 490px;
  background: #f3f3f6;
  border: 1px solid #d8d8da;
}
.dlg-title {
  height: 28px;
  background: #fbfbfb;
  border-bottom: 1px solid #d8d8da;
  padding-left: 14px;
  line-height: 27px;
}
.group {
  position: relative;
  margin: 0 13px;
  border: 1px solid #e6e6e9;
  border-radius: 4px;
  padding: 8px 0 0 1px;
  display: flex;
  flex-direction: column;
  gap: 6px;
}
.g-first {
  margin-top: 28px;
  height: 200px;
}
.g-second {
  margin-top: 14px;
  height: 201px;
}
.legend {
  position: absolute;
  left: 1px;
  top: -9px;
  background: #f3f3f6;
  padding: 0 3px 0 2px;
  line-height: 16px;
}
.drow {
  display: flex;
  align-items: center;
  height: 20px;
  flex: none;
}
.drow label {
  width: 30px;
  flex: none;
}
.drow .ctl {
  flex: none;
}
.seg-short { width: 120px; }
.seg-wide { width: 216px; }
.tall-seg { height: 22px; }
.drow:has(.tall-seg) { height: 22px; }
.c-value { width: 91px; }
.c-short { width: 120px; }
.c-wide { width: 216px; }
.c-content { width: 187px; }
.fx {
  width: 24px;
  margin-left: 5px;
  align-items: center;
  justify-content: center;
}

.mark {
  position: absolute;
  border: 4px solid #ff2a1e;
  border-radius: 4px;
}
.mark-chart {
  left: 15px;
  top: 384px;
  width: 566px;
  height: 295px;
}
.mark-dialog {
  left: 689px;
  top: 294px;
  width: 572px;
  height: 499px;
}
.mark-list {
  left: 1376px;
  top: 653px;
  width: 166px;
  height: 56px;
  border-radius: 7px;
}
```
